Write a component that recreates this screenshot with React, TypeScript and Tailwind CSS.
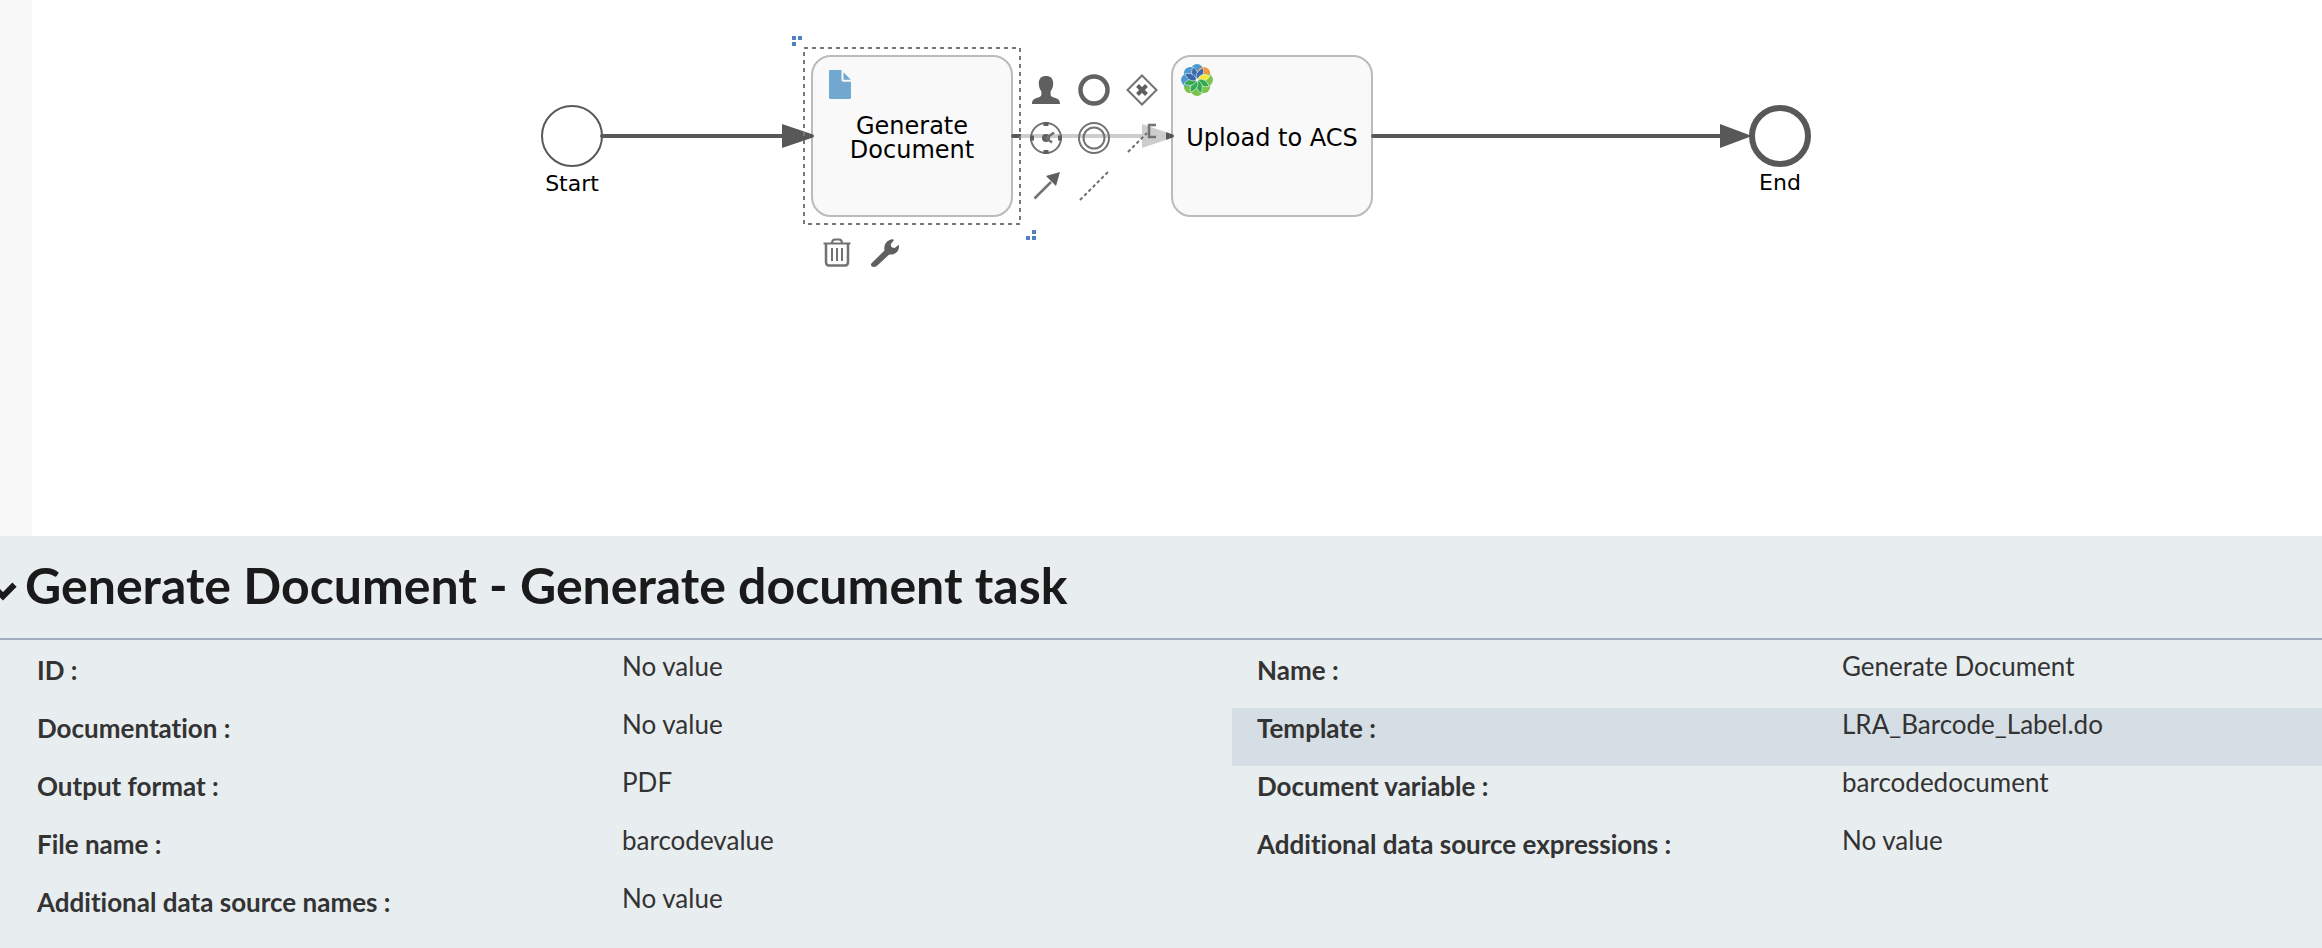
import type { ReactNode } from "react";

type Property = { label: string; value: string; active?: boolean };

const leftProperties: Property[] = [
  { label: "ID", value: "No value" },
  { label: "Documentation", value: "No value" },
  { label: "Output format", value: "PDF" },
  { label: "File name", value: "barcodevalue" },
  { label: "Additional data source names", value: "No value" },
];

const rightProperties: Property[] = [
  { label: "Name", value: "Generate Document" },
  { label: "Template", value: "LRA_Barcode_Label.do", active: true },
  { label: "Document variable", value: "barcodedocument" },
  { label: "Additional data source expressions", value: "No value" },
];

function Icon({ children }: { children: ReactNode }) {
  return (
    <svg
      viewBox="0 0 32 32"
      className="size-8"
      fill="none"
      stroke="#727272"
      strokeWidth="2"
      aria-hidden="true"
    >
      {children}
    </svg>
  );
}

function ToolButton({ label, children }: { label: string; children: ReactNode }) {
  return (
    <button type="button" aria-label={label} className="size-8 cursor-pointer">
      <Icon>{children}</Icon>
    </button>
  );
}

function ShapeMenu() {
  return (
    <div className="absolute left-[1021px] top-[66px] grid grid-cols-3 gap-4 bg-white/70 py-2 pl-[9px] pr-2">
      <ToolButton label="User task">
        <path
          d="M16 2c4.600 0 7.200 2.600 7.200 7.200 0 4-1.400 6.400-2.600 8.300v2.700c0 1.800 1 2.500 3.300 3.200 4.300 1.200 6.100 2.300 6.100 6.600H2c0-4.300 1.800-5.400 6.100-6.600 2.300-.7 3.300-1.400 3.300-3.200v-2.700c-1.200-1.900-2.600-4.300-2.600-8.300C8.800 4.600 11.400 2 16 2z"
          fill="#5f5f5f"
          stroke="none"
        />
      </ToolButton>
      <ToolButton label="End event">
        <circle cx="16" cy="16" r="13.500" strokeWidth="4.500" stroke="#626262" />
      </ToolButton>
      <ToolButton label="Exclusive gateway">
        <path d="M16 1.500L30.500 16 16 30.500 1.500 16z" />
        <path d="M11.500 11.500l9 9M20.500 11.500l-9 9" strokeWidth="4" stroke="#5f5f5f" />
      </ToolButton>
      <ToolButton label="Timer event">
        <circle cx="16" cy="16" r="15" />
        <path d="M16 0v4M16 28v4M0 16h4M28 16h4" strokeWidth="5" stroke="#5f5f5f" />
        <circle cx="16" cy="16" r="4" fill="#5f5f5f" stroke="none" />
        <path d="M16 16.500l8-6M16 16l6 4.500" strokeWidth="2.500" />
      </ToolButton>
      <ToolButton label="Intermediate event">
        <circle cx="16" cy="16" r="15" />
        <circle cx="16" cy="16" r="10.500" />
      </ToolButton>
      <ToolButton label="Text annotation">
        <path d="M2 30L21 11" strokeDasharray="3.500 2.500" />
        <path d="M30 3h-7v12h7" strokeWidth="2.500" />
      </ToolButton>
      <ToolButton label="Sequence flow">
        <path d="M4.500 28.500L21 12" strokeWidth="2.500" />
        <path d="M30 2L16 6l10 10z" fill="#5f5f5f" stroke="none" />
      </ToolButton>
      <ToolButton label="Association">
        <path d="M2 30L30 2" strokeDasharray="3.500 2.500" />
      </ToolButton>
    </div>
  );
}

function ElementActions() {
  return (
    <div className="absolute left-[821px] top-[237px] flex gap-4">
      <ToolButton label="Delete">
        <path d="M2.500 6.500h27M11 6c0-2.500 1-3.500 3-3.500h4c2 0 3 1 3 3.500" />
        <path d="M5 7v18c0 2.500 1 3.500 3 3.500h16c2 0 3-1 3-3.500V7" strokeWidth="2.500" />
        <path d="M11 11v13M16 11v13M21 11v13" />
      </ToolButton>
      <ToolButton label="Change type">
        <path
          d="M2.300 26.500L15.500 13.500C14.500 8 17.500 2.500 24 2.200l1 .9-3.300 4.200.8 3 3.200.8L29.800 7.800c1.200 5.700-3.300 10.400-9.600 9.600L7.500 29.200c-3.500 2-6.800-.2-5.200-2.700z"
          fill="#5f5f5f"
          stroke="none"
        />
      </ToolButton>
    </div>
  );
}

const petals = [
  { angle: 0, outer: "#4a98cf", inner: "#3a67ad" },
  { angle: 45, outer: "#f7993a", inner: "#3a67ad" },
  { angle: 90, outer: "#7cc34b", inner: "#fde93b" },
  { angle: 135, outer: "#7cc34b", inner: "#33a94f" },
  { angle: 180, outer: "#7cc34b", inner: "#33a94f" },
  { angle: 225, outer: "#7cc34b", inner: "#33a94f" },
  { angle: 270, outer: "#4a98cf", inner: "#33a94f" },
  { angle: 315, outer: "#4a98cf", inner: "#3a67ad" },
];

function FlowerLogo() {
  return (
    <svg viewBox="-16 -16 32 32" className="size-8" aria-hidden="true">
      {petals.map((p) => (
        <circle key={p.angle} cy="-9.500" r="6.400" fill={p.outer} transform={`rotate(${p.angle})`} />
      ))}
      {petals.map((p) => (
        <path
          key={p.angle}
          d="M0 0C-3.200-2.800-5-8 .6-13.600 4-9.500 4.200-4 0 0z"
          fill={p.inner}
          stroke="#e4f1ee"
          strokeWidth="0.600"
          transform={`rotate(${p.angle - 20})`}
        />
      ))}
      <circle r="1.500" fill="#f9f9f9" />
    </svg>
  );
}

function Task({ className, icon, children }: { className: string; icon: ReactNode; children: ReactNode }) {
  return (
    <div
      className={`absolute top-[55px] flex h-[162px] w-[202px] items-center justify-center rounded-[20px] border-2 border-[#bbbbbb] bg-[#f9f9f9] pt-1 text-center text-2xl leading-6 ${className}`}
    >
      {icon}
      <span>{children}</span>
    </div>
  );
}

function Canvas() {
  return (
    <section
      aria-label="Process diagram"
      className="relative h-[536px] shrink-0 overflow-hidden border-l-32 border-[#f8f8f8] bg-white font-['DejaVu_Sans',Verdana,sans-serif] text-black"
    >
      <div className="absolute -left-8 top-0 h-full w-[2322px]">
        <div className="absolute left-[541px] top-[105px] size-[62px] rounded-full border-2 border-[#585858] bg-white" />
        <div className="absolute left-[512px] top-[172px] w-[120px] text-center text-[22px] leading-6">Start</div>

        <Task
          className="left-[811px]"
          icon={
            <svg viewBox="0 0 22 29" className="absolute left-4 top-[13px] h-[29px] w-[22px]" aria-hidden="true">
              <path
                d="M1 0h11.500v9.500c0 1.500.8 2.200 2.200 2.200H22V28a1 1 0 0 1-1 1H1a1 1 0 0 1-1-1V1a1 1 0 0 1 1-1z"
                fill="#72a7cf"
              />
              <path d="M14.500 2.200L21.800 9.700h-7.300z" fill="#72a7cf" />
            </svg>
          }
        >
          Generate
          <br />
          Document
        </Task>
        <Task
          className="left-[1171px]"
          icon={
            <span className="absolute left-2 top-[7px]">
              <FlowerLogo />
            </span>
          }
        >
          Upload to ACS
        </Task>

        <svg viewBox="0 0 2322 536" className="absolute left-0 top-0 h-[536px] w-[2322px]" aria-hidden="true">
          <g stroke="#585858" strokeWidth="4" fill="#585858">
            <path d="M602 136H784M1013 136H1144M1373 136H1722" strokeLinecap="round" />
            <path
              d="M782 124L813 134.500Q815 136 813 137.500L782 148zM1142 124L1173 134.500Q1175 136 1173 137.500L1142 148zM1720 124L1752 136 1720 148z"
              stroke="none"
            />
          </g>
          <rect x="804" y="48" width="216" height="176" fill="none" stroke="#777777" strokeWidth="2" strokeDasharray="4 4" />
          <path
            d="M792 36h4v4h-4zM798 36h4v4h-4zM792 42h4v4h-4zM1032 230h4v4h-4zM1026 236h4v4h-4zM1032 236h4v4h-4z"
            fill="#4f81bf"
          />
        </svg>

        <div className="absolute left-[1749px] top-[105px] size-[62px] rounded-full border-6 border-[#585858] bg-white" />
        <div className="absolute left-[1720px] top-[171px] w-[120px] text-center text-[22px] leading-6">End</div>

        <ShapeMenu />
        <ElementActions />
      </div>
    </section>
  );
}

function PropertyList({ items }: { items: Property[] }) {
  return (
    <dl>
      {items.map((item) => (
        <div
          key={item.label}
          className={`flex h-[58px] pl-[25px] text-[26px] leading-8 ${item.active ? "bg-[#d6dee5]" : ""}`}
        >
          <dt className="w-[585px] shrink-0 pt-1 font-bold">{item.label} :</dt>
          <dd>{item.value}</dd>
        </div>
      ))}
    </dl>
  );
}

export default function App() {
  return (
    <main className="flex min-h-screen flex-col overflow-x-hidden bg-[#e8edef] font-[Lato,sans-serif] text-[#333333] [font-variant-ligatures:none]">
      <Canvas />
      <section>
        <h2 className="border-b-2 border-[#a2acbc]">
          <button
            type="button"
            className="flex h-[102px] items-center gap-2 pb-1 text-[50px] font-bold text-[#1a1a1a]"
          >
            <svg viewBox="0 0 29 32" className="-ml-3 h-8 w-[29px]" aria-hidden="true">
              <path d="M3.500 15.700L15 27.300l11.500-11.600" fill="none" stroke="#1a1a1a" strokeWidth="6" />
            </svg>
            Generate Document - Generate document task
          </button>
        </h2>
        <div className="grid grid-cols-[1220fr_1090fr] pl-3 pt-[10px]">
          <PropertyList items={leftProperties} />
          <PropertyList items={rightProperties} />
        </div>
      </section>
    </main>
  );
}
